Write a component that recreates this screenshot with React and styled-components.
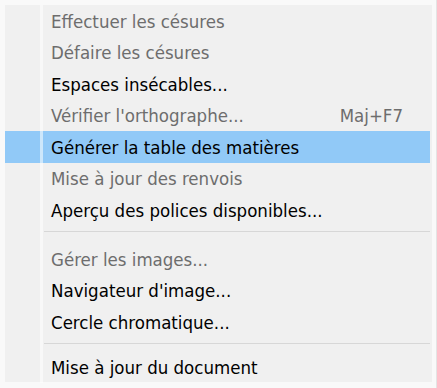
import React from 'react';
import styled, { createGlobalStyle } from 'styled-components';

const GlobalStyle = createGlobalStyle`
    html, body {
        margin: 0;
        padding: 0;
        background: #f9f9f9;
    }
    body {
        font-family: 'DejaVu Sans Condensed', 'Liberation Sans', Arial, sans-serif;
    }
`;

const MENU_ITEMS = [
    { label: 'Effectuer les césures', disabled: true },
    { label: 'Défaire les césures', disabled: true },
    { label: 'Espaces insécables...' },
    { label: "Vérifier l'orthographe...", disabled: true, shortcut: 'Maj+F7' },
    { label: 'Générer la table des matières', active: true },
    { label: 'Mise à jour des renvois', disabled: true },
    { label: 'Aperçu des polices disponibles...' },
    { separator: true, gap: 'first' },
    { label: 'Gérer les images...', disabled: true },
    { label: "Navigateur d'image..." },
    { label: 'Cercle chromatique...' },
    { separator: true, gap: 'second' },
    { label: 'Mise à jour du document' },
];

const Frame = styled.div`
    width: 437px;
    height: 388px;
    box-sizing: border-box;
    padding: 5px 4px 6px 5px;
    border-right: 1px solid #e4e4e4;
`;

const Menu = styled.ul`
    margin: 0;
    padding: 0;
    list-style: none;
    width: 427px;
    height: 377px;
    background: #f0f0f0;
`;

const Row = styled.li`
    display: grid;
    grid-template-columns: 35px 3px 1fr auto;
    align-items: center;
    height: 31.5px;
    margin-right: 2px;
    background: ${(props) => (props.$active ? '#91c9f7' : 'transparent')};
`;

const Stripe = styled.span`
    align-self: stretch;
    background: rgba(255, 255, 255, 0.55);
`;

const Label = styled.span`
    padding-left: 8px;
    padding-top: 1px;
    font-size: 18.5px;
    color: ${(props) => (props.$disabled ? '#6d6d6d' : '#000')};
    white-space: nowrap;
`;

const Shortcut = styled.span`
    padding-right: 27px;
    padding-top: 1px;
    font-size: 18.5px;
    color: ${(props) => (props.$disabled ? '#6d6d6d' : '#000')};
`;

const SeparatorRow = styled.li`
    display: grid;
    grid-template-columns: 35px 3px 1fr;
    height: ${(props) => (props.$gap === 'first' ? '17.5px' : '13.5px')};
    margin-right: 2px;
`;

const Line = styled.span`
    margin: 5px 0 0 1px;
    height: 1px;
    background: #d7d7d7;
`;

const App = () => {
    return (
        <>
            <GlobalStyle />
            <Frame>
                <Menu>
                    {MENU_ITEMS.map((item, i) => {
                        if (item.separator) {
                            return (
                                <SeparatorRow key={i} $gap={item.gap}>
                                    <span />
                                    <Stripe />
                                    <Line />
                                </SeparatorRow>
                            );
                        }
                        return (
                            <Row key={i} $active={item.active}>
                                <span />
                                <Stripe />
                                <Label $disabled={item.disabled}>{item.label}</Label>
                                {item.shortcut ? <Shortcut $disabled={item.disabled}>{item.shortcut}</Shortcut> : <span />}
                            </Row>
                        );
                    })}
                </Menu>
            </Frame>
        </>
    );
};

export default App;
